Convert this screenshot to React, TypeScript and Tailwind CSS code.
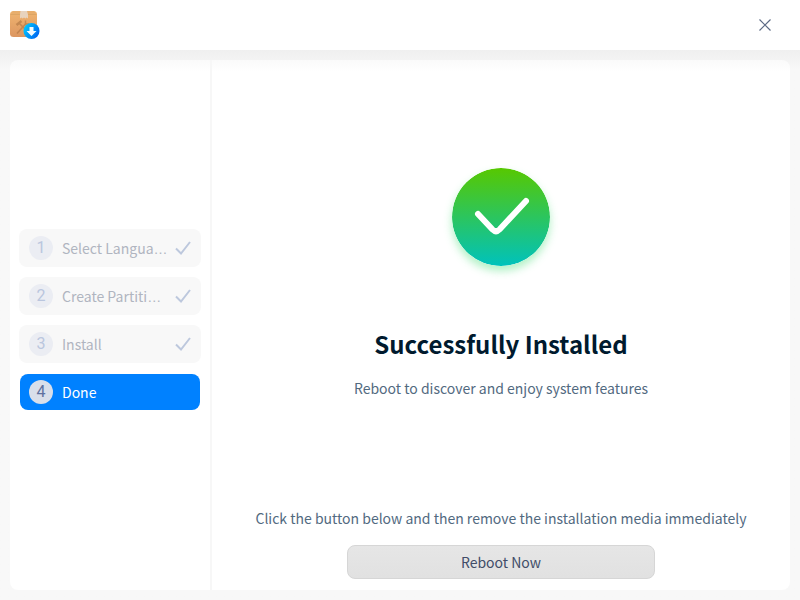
import React from "react";

const steps = [
  { id: 1, label: "Select Langua", clipped: true },
  { id: 2, label: "Create Partiti", clipped: true },
  { id: 3, label: "Install", clipped: false },
  { id: 4, label: "Done", clipped: false },
];

const currentStep = 4;

const PackageIcon = () => (
  <svg className="h-8 w-8" viewBox="0 0 32 32" aria-hidden="true">
    <defs>
      <linearGradient id="box" x1="0" y1="0" x2="0" y2="1">
        <stop offset="0" stopColor="#f0b570" />
        <stop offset="1" stopColor="#dc9660" />
      </linearGradient>
      <linearGradient id="badge" x1="0" y1="0.2" x2="1" y2="0.8">
        <stop offset="0" stopColor="#00ccff" />
        <stop offset="1" stopColor="#0060f0" />
      </linearGradient>
    </defs>
    <rect x="2" y="2" width="27" height="26" rx="3.5" fill="url(#box)" />
    <path d="M5 2h21l2.500 3.500h-26z" fill="#e8ae6c" />
    <path d="M2.500 5.500h26" stroke="#cf9a5c" strokeWidth="0.5" />
    <path d="M12.500 2h6.500l1 3.500V9.500l-1.500-1-1 1-1.500-1-1.500 1-1-1-1.500 1v-4z" fill="#e8d3bd" />
    {/* crossed hammer and wrench */}
    <g stroke="#a8703f" fill="none" opacity="0.55">
      <path d="M11 14l9 9" strokeWidth="1.500" />
      <path d="M9 24.500l9-10" strokeWidth="1.500" />
      <path d="M8.500 16l5-4" strokeWidth="2.500" />
      <path d="M17.500 11.500v3.500h3.500" strokeWidth="1.500" />
    </g>
    <circle cx="23.500" cy="22" r="8" fill="url(#badge)" />
    <path d="M21.500 18h4v4h3l-5 5-5-5h3z" fill="#f4fbff" />
  </svg>
);

const CheckIcon = () => (
  <svg className="h-4 w-4 shrink-0" viewBox="0 0 16 16" fill="none" aria-hidden="true">
    <path d="M1 8.500l5 5L15 2" stroke="#bdc8dd" strokeWidth="2" />
  </svg>
);

const SuccessIcon = () => (
  <svg
    className="h-[98px] w-[98px] rounded-full shadow-[0_5px_8px_rgba(60,220,110,0.4)]"
    viewBox="0 0 98 98"
    fill="none"
    aria-hidden="true"
  >
    <defs>
      <linearGradient id="success" x1="0" y1="0" x2="0" y2="1">
        <stop offset="0" stopColor="#57c800" />
        <stop offset="1" stopColor="#00c2bc" />
      </linearGradient>
    </defs>
    <circle cx="49" cy="49" r="49" fill="url(#success)" />
    <path
      d="M26 46L40.500 61.500Q44 65 47.500 61.500L74 33"
      stroke="white"
      strokeWidth="6"
      strokeLinecap="round"
      strokeLinejoin="round"
    />
  </svg>
);

const App = () => {
  return (
    <div className="flex min-h-screen flex-col bg-[#f8f8f8] font-['Noto_Sans_CJK_SC',sans-serif] text-sm leading-6">
      <header className="flex h-[50px] items-center justify-between bg-white pl-2 pr-5">
        <PackageIcon />
        <button type="button" aria-label="Close" className="flex h-[30px] w-[30px] items-center justify-center">
          <svg className="h-3 w-3" viewBox="0 0 12 12" aria-hidden="true">
            <path d="M0.500 0.500l11 11M11.500 0.500l-11 11" stroke="#5c6a85" strokeWidth="1.200" />
          </svg>
        </button>
      </header>

      <div className="flex grow bg-linear-to-b from-[#efefef] to-[#f8f8f8] to-[20px] p-2.5">
        <div className="flex grow rounded-lg bg-linear-to-b from-[#fafafa] to-white to-[12px]">
          {/* steps */}
          <nav className="flex w-[202px] shrink-0 flex-col justify-center border-r-2 border-[#f7f7f7] px-[9px] pb-2.5">
            <ol className="flex flex-col gap-2.5">
              {steps.map((step) =>
                step.id === currentStep ? (
                  <li
                    key={step.id}
                    aria-current="step"
                    className="mx-px my-px flex h-9 items-center gap-[9px] rounded-lg bg-[#0081ff] px-[9px] text-white"
                  >
                    <span className="flex h-6 w-6 shrink-0 items-center justify-center rounded-full bg-[#d9dfea] font-['Roboto',sans-serif] text-base text-[#5f719f]">
                      {step.id}
                    </span>
                    <span>{step.label}</span>
                  </li>
                ) : (
                  <li
                    key={step.id}
                    className="flex h-[38px] items-center gap-[9px] rounded-lg bg-[#f8f8f8] px-2.5 text-[#b0b5c0]"
                  >
                    <span className="flex h-6 w-6 shrink-0 items-center justify-center rounded-full bg-[#ebedf3] font-['Roboto',sans-serif] text-base text-[#bac6de]">
                      {step.id}
                    </span>
                    <span className="w-0 grow whitespace-nowrap">
                      {step.label}
                      {step.clipped && <span className="font-['Liberation_Sans',sans-serif]">…</span>}
                    </span>
                    <CheckIcon />
                  </li>
                )
              )}
            </ol>
          </nav>

          {/* result */}
          <main className="flex grow flex-col items-center px-5 pb-[11px] pt-[108px] text-center text-[#526a7f]">
            <SuccessIcon />
            <h1 className="mt-[60px] text-2xl font-bold leading-9 text-[#001a2e]">Successfully Installed</h1>
            <p className="mt-3.5">Reboot to discover and enjoy system features</p>
            <p className="mt-auto pt-5">Click the button below and then remove the installation media immediately</p>
            <button
              type="button"
              className="mt-[15px] h-[34px] w-[308px] rounded-lg border border-[#d6d6d6] bg-linear-to-b from-[#e6e6e6] to-[#e1e1e1] text-[#414d68]"
            >
              Reboot Now
            </button>
          </main>
        </div>
      </div>
    </div>
  );
};

export default App;
